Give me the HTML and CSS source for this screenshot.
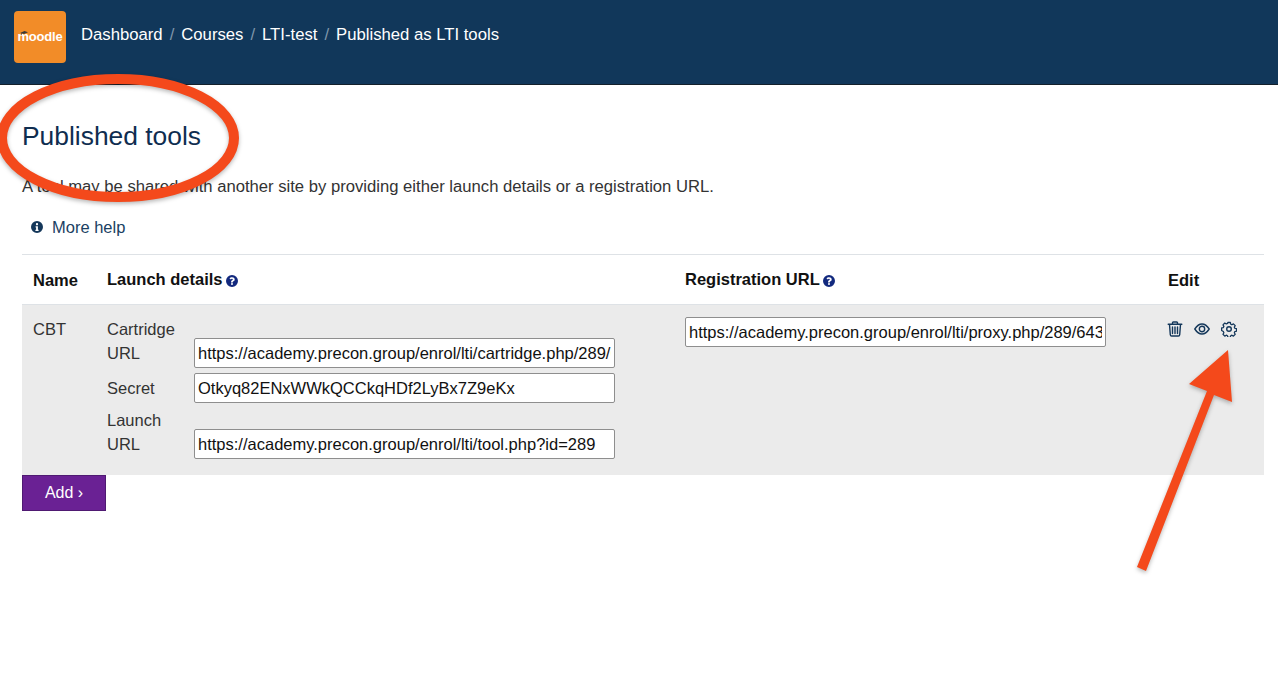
FILE: index.html
```html
<!DOCTYPE html>
<html lang="en">
<head>
<meta charset="utf-8">
<title>Published as LTI tools</title>
<link rel="stylesheet" href="styles.css">
</head>
<body>
<header class="topbar">
  <a class="logo" href="#">
    <svg class="logo-cap" viewBox="0 0 10 6" aria-hidden="true"><path d="M0 2.4 5.6 0 10 1.4 5 3.6 2 2.6V5H1.2V2.4Z"/></svg>
    <span>moodle</span>
  </a>
  <nav class="crumbs">
    <a href="#">Dashboard</a><span class="sep">/</span>
    <a href="#">Courses</a><span class="sep">/</span>
    <a href="#">LTI-test</a><span class="sep">/</span>
    <a href="#">Published as LTI tools</a>
  </nav>
</header>
<main class="content">
  <h2 class="title">Published tools</h2>
  <p class="intro">A tool may be shared with another site by providing either launch details or a registration URL.</p>
  <a class="help" href="#">
    <svg class="icon-info" viewBox="0 0 24 24" aria-hidden="true"><path fill-rule="evenodd" d="M12 0a12 12 0 1 0 0 24 12 12 0 0 0 0-24ZM12 4.2a2.3 2.3 0 1 1 0 4.6 2.3 2.3 0 0 1 0-4.6ZM9.2 10.4h4.6v7h1.4v2.6H8.8v-2.6h1.4v-4.4h-1Z"/></svg>
    <span>More help</span>
  </a>
  <table class="tools">
    <colgroup><col class="c-name"><col class="c-launch"><col class="c-reg"><col class="c-edit"></colgroup>
    <thead>
      <tr>
        <th class="th-low">Name</th>
        <th>Launch details<svg class="icon-q" viewBox="0 0 24 24" aria-hidden="true"><path fill-rule="evenodd" d="M12 0a12 12 0 1 0 0 24 12 12 0 0 0 0-24ZM12.2 4.4c2.9 0 5.2 1.8 5.2 4.5 0 2-1.2 3-2.5 3.8-.9.6-1.2.9-1.2 1.7v.5H10v-.8c0-1.7.8-2.6 2-3.4.9-.6 1.6-1 1.6-1.8 0-.8-.7-1.3-1.6-1.3-1 0-1.7.6-2.3 1.5L7 7.2C8 5.4 9.8 4.4 12.2 4.4ZM12 16.2a2 2 0 1 1 0 4 2 2 0 0 1 0-4Z"/></svg></th>
        <th>Registration URL<svg class="icon-q" viewBox="0 0 24 24" aria-hidden="true"><path fill-rule="evenodd" d="M12 0a12 12 0 1 0 0 24 12 12 0 0 0 0-24ZM12.2 4.4c2.9 0 5.2 1.8 5.2 4.5 0 2-1.2 3-2.5 3.8-.9.6-1.2.9-1.2 1.7v.5H10v-.8c0-1.7.8-2.6 2-3.4.9-.6 1.6-1 1.6-1.8 0-.8-.7-1.3-1.6-1.3-1 0-1.7.6-2.3 1.5L7 7.2C8 5.4 9.8 4.4 12.2 4.4ZM12 16.2a2 2 0 1 1 0 4 2 2 0 0 1 0-4Z"/></svg></th>
        <th class="th-low">Edit</th>
      </tr>
    </thead>
    <tbody>
      <tr>
        <td>CBT</td>
        <td>
          <div class="launch">
            <span class="lab">Cartridge URL</span>
            <input class="url" type="text" readonly value="https://academy.precon.group/enrol/lti/cartridge.php/289/6439e0a7/cartridge.xml">
            <span class="lab">Secret</span>
            <input class="url" type="text" readonly value="Otkyq82ENxWWkQCCkqHDf2LyBx7Z9eKx">
            <span class="lab">Launch URL</span>
            <input class="url" type="text" readonly value="https://academy.precon.group/enrol/lti/tool.php?id=289">
          </div>
        </td>
        <td><input class="url reg" type="text" readonly value="https://academy.precon.group/enrol/lti/proxy.php/289/6439e0a7/profile.xml"></td>
        <td>
          <div class="actions">
            <svg viewBox="0 0 16 16" aria-hidden="true"><path d="M1.2 3.200h13.600M5.500 3V1.800q0-.8.8-.8h3.400q.8 0 .8.8V3M2.500 3.400l.8 10.400q.1 1.200 1.300 1.200h6.800q1.200 0 1.300-1.200l.8-10.400M5.500 6v6.600M8 6v6.600M10.500 6v6.600"/></svg>
            <svg viewBox="0 0 16 16" aria-hidden="true"><path d="M.8 8Q4 3 8 3t7.200 5Q12 13 8 13T.8 8Z"/><circle cx="8" cy="8" r="2.700"/></svg>
            <svg viewBox="0 0 16 16" aria-hidden="true"><path d="M6.600 1h2.800l.4 1.900 1.300.6 1.700-1 2 2-1 1.700.6 1.300 1.900.4v2.800l-1.900.4-.6 1.300 1 1.700-2 2-1.700-1-1.300.6-.4 1.900H6.600l-.4-1.900-1.300-.6-1.700 1-2-2 1-1.700-.6-1.300L-.3 9.800V7l1.900-.4.600-1.300-1-1.700 2-2 1.700 1 1.300-.6Z" transform="translate(.9 .6) scale(.9)"/><circle cx="8" cy="8" r="2.300"/></svg>
          </div>
        </td>
      </tr>
    </tbody>
  </table>
  <button class="add" type="button">Add &#8250;</button>
</main>
<svg class="markup" viewBox="0 0 1278 689" aria-hidden="true">
  <ellipse cx="118" cy="138" rx="116" ry="59" class="ring"/>
  <path class="arrow" d="M1137 567 1207 391 1189 384 1228 350 1232 402 1214 395 1146 571Z"/>
</svg>
</body>
</html>
```
FILE: styles.css
```css
* { box-sizing: border-box; }
html, body { margin: 0; height: 100%; }
body {
  position: relative;
  overflow: hidden;
  background: #fff;
  color: #333;
  font-family: "Liberation Sans", Arial, sans-serif;
  font-size: 16.500px;
  line-height: 24px;
}
a { color: inherit; text-decoration: none; }

.topbar {
  display: flex;
  align-items: flex-start;
  height: 85px;
  padding: 11px 0 0 14px;
  background: #11375a;
  border-bottom: 1px solid #14202b;
}
.logo {
  position: relative;
  display: flex;
  align-items: center;
  justify-content: center;
  width: 52px;
  height: 52px;
  background: #f28c28;
  border-radius: 4px;
  color: #fff;
  font-size: 13px;
  font-weight: 700;
  letter-spacing: -0.2px;
}
.logo-cap {
  position: absolute;
  left: 6px;
  top: 20px;
  width: 8px;
  height: 5px;
  fill: #3a3a3a;
}
.crumbs {
  display: flex;
  align-items: center;
  height: 47px;
  margin-left: 15px;
  color: #fff;
  font-size: 16.700px;
}
.sep { margin: 0 7px; color: #7f96ab; }

.content { padding: 0 14px 0 22px; }
.title {
  margin: 0;
  padding-top: 34px;
  height: 89px;
  color: #0f2d50;
  font-size: 26.400px;
  font-weight: 400;
  line-height: 34px;
}
.intro { margin: 0; padding-top: 1px; height: 40px; line-height: 24px; font-size: 16.650px; }
.help {
  display: flex;
  align-items: center;
  height: 40px;
  padding: 0 0 14px 9px;
  color: #1b3f63;
}
.icon-info { width: 12px; height: 12px; margin-right: 9px; fill: #14375a; }

.tools {
  width: 1242px;
  margin-top: 0;
  border-collapse: collapse;
  table-layout: fixed;
}
.c-name { width: 74px; }
.c-launch { width: 578px; }
.c-reg { width: 483px; }
.c-edit { width: 107px; }
.tools th {
  height: 50px;
  padding: 0 11px 2px;
  border-top: 1px solid #dee2e6;
  border-bottom: 1px solid #dee2e6;
  color: #111;
  font-weight: 700;
  text-align: left;
  vertical-align: middle;
}
.tools th.th-low { padding-bottom: 0; }
.icon-q { width: 12px; height: 12px; margin-left: 3px; vertical-align: -2px; fill: #12297e; }
.tools td {
  padding: 12px 11px 16px;
  background: #ebebeb;
  vertical-align: top;
}
.launch {
  display: grid;
  grid-template-columns: 87px 421px;
  row-gap: 5px;
  align-items: end;
}
.lab { padding: 0 8px 3px 0; }
.url {
  display: block;
  width: 100%;
  height: 30px;
  padding: 0 3px;
  border: 1px solid #8e8e8e;
  border-radius: 2px;
  background: #fff;
  color: #111;
  font: 16.500px "Liberation Sans", Arial, sans-serif;
  outline: none;
}
.reg { width: 421px; margin-top: 0; height: 30px; }
.actions { display: flex; gap: 11px; padding: 4px 0 0; margin-left: -1px; }
.actions svg {
  width: 16px;
  height: 16px;
  fill: none;
  stroke: #14375a;
  stroke-width: 1.400;
  stroke-linejoin: round;
  stroke-linecap: round;
}
.add {
  display: block;
  width: 84px;
  height: 36px;
  padding: 0;
  border: 1px solid #4f1a72;
  background: #6a2194;
  color: #fff;
  font: 16px "Liberation Sans", Arial, sans-serif;
}
.markup {
  position: absolute;
  left: 0;
  top: 0;
  width: 1278px;
  height: 689px;
  pointer-events: none;
  filter: drop-shadow(0 2px 2px rgba(0, 0, 0, .28));
}
.ring { fill: none; stroke: #f4491b; stroke-width: 10; }
.arrow { fill: #f4491b; }
```
